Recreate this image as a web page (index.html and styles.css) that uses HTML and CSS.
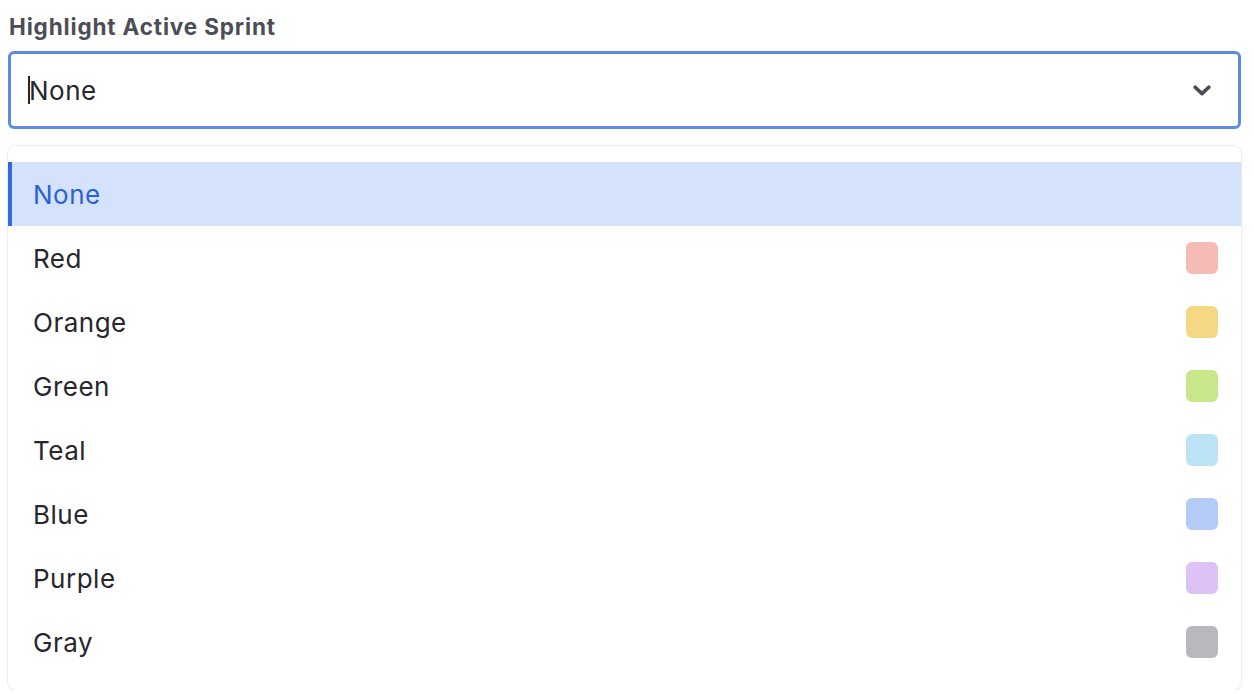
FILE: index.html
```html
<!DOCTYPE html>
<html>
    <head>
        <meta charset="UTF-8">
        <title>Highlight Active Sprint</title>
        <link rel="stylesheet" href="styles.css">
    </head>
    <body>
        <div class="field">
            <label class="field-label">Highlight Active Sprint</label>
            <div class="select">
                <span class="caret"></span>
                <span class="select-value">None</span>
                <svg class="chevron" viewBox="0 0 18 11" width="18" height="11">
                    <path d="M2.2 2.2 L9 8.6 L15.8 2.2" fill="none" stroke="#4a4c54" stroke-width="3.6" stroke-linecap="round" stroke-linejoin="round"/>
                </svg>
            </div>
            <ul class="menu">
                <li class="option is-selected">None</li>
                <li class="option">Red <span class="swatch sw-red"></span></li>
                <li class="option">Orange <span class="swatch sw-orange"></span></li>
                <li class="option">Green <span class="swatch sw-green"></span></li>
                <li class="option">Teal <span class="swatch sw-teal"></span></li>
                <li class="option">Blue <span class="swatch sw-blue"></span></li>
                <li class="option">Purple <span class="swatch sw-purple"></span></li>
                <li class="option">Gray <span class="swatch sw-gray"></span></li>
            </ul>
        </div>
    </body>
</html>
```

FILE: styles.css
```css
body {
    font-family: Inter, "Noto Sans", "Liberation Sans", sans-serif;
    margin: 0;
    padding: 0;
    color: #25272c;
    background: #fff;
}
.field {
    padding: 13px 13px 0 8px;
}
.field-label {
    display: block;
    font-size: 22.5px;
    font-weight: 700;
    letter-spacing: 0.85px;
    color: #4b4e56;
    line-height: 28px;
    margin-left: 1px;
    margin-bottom: 10px;
}
.select {
    display: flex;
    align-items: center;
    height: 72px;
    border: 3px solid #5b8ce4;
    border-radius: 6px;
    padding: 0 27px 0 17px;
}
.caret {
    width: 2px;
    height: 28px;
    background: #25272c;
    margin-right: -1px;
}
.select-value {
    flex: 1;
    font-size: 26px;
    letter-spacing: 0.5px;
}
.chevron {
    display: block;
}
.menu {
    list-style: none;
    margin: 17px 0 0;
    padding: 16px 0;
    border-radius: 8px;
    box-shadow: 0 0 0 1px #ececee, 0 1px 3px rgba(0, 0, 0, 0.06);
}
.option {
    display: flex;
    align-items: center;
    justify-content: space-between;
    height: 64px;
    padding: 0 23px 0 25px;
    font-size: 26px;
    letter-spacing: 0.5px;
    color: #25272c;
}
.option.is-selected {
    background: #d4e2fb;
    color: #2a62d6;
    border-left: 4px solid #2f6bdc;
    padding-left: 21px;
}
.swatch {
    width: 32px;
    height: 32px;
    border-radius: 6px;
}
.sw-red { background: #f5bbb5; }
.sw-orange { background: #f5d886; }
.sw-green { background: #c8e78a; }
.sw-teal { background: #bde3f6; }
.sw-blue { background: #b3cbf6; }
.sw-purple { background: #dcc2f5; }
.sw-gray { background: #b8b9be; }
```
